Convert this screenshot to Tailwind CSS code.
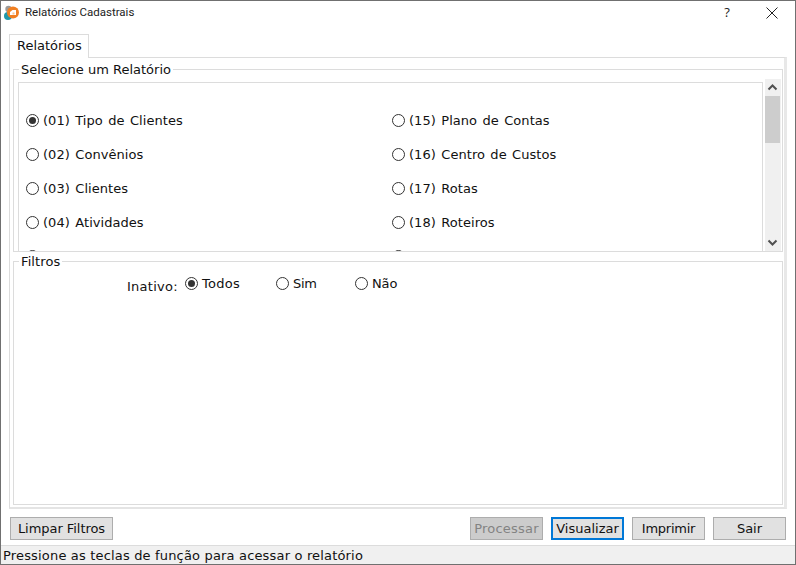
<!DOCTYPE html>
<html><head><meta charset="utf-8">
<script src="https://cdn.jsdelivr.net/npm/@tailwindcss/browser@4"></script>
</head>
<body class="m-0 bg-white">
<div class="w-[796px] h-[565px] flex flex-col border border-[#707070] bg-white overflow-hidden font-['DejaVu_Sans',sans-serif] text-[13px] text-[#111]">
  <!-- title bar -->
  <div class="h-[24px] mb-[1px] shrink-0 flex items-center pl-[2px]">
    <svg width="18" height="18" viewBox="0 0 18 18" class="shrink-0">
      <circle cx="5.500" cy="5" r="3.200" fill="#9a9a9a"/>
      <circle cx="5" cy="12" r="4" fill="#1f97a8"/>
      <circle cx="10" cy="8.500" r="6" fill="#f07f22"/>
      <path d="M7 11V8l2.500-2H13v5z" fill="#fff"/>
      <path d="M9.500 10.500V8.500h2v2z" fill="#f9c08e"/>
    </svg>
    <span class="ml-[4px] font-['Roboto',sans-serif] text-[11.5px] text-[#222]">Relatórios Cadastrais</span>
    <span class="ml-auto w-[14px] text-center font-['Open_Sans',sans-serif] text-[13px] text-[#222]">?</span>
    <svg width="12" height="12" viewBox="0 0 12 12" class="ml-[32px] mr-[17px]"><path d="M.5.500l11 11M11.500.500l-11 11" stroke="#222" stroke-width="1" fill="none"/></svg>
  </div>
  <!-- tabs -->
  <div class="mt-[8px] ml-[8px] h-[24px] w-[80px] shrink-0 border border-b-0 border-[#dcdcdc] flex items-center pl-[7px] pb-[2px] relative z-10 bg-white">Relatórios</div>
  <!-- tab panel -->
  <div class="ml-[8px] w-[778px] h-[452px] shrink-0 border border-[#dcdcdc] border-r-[3px] border-r-[#e8e8e8] border-b-[2px] border-b-[#e4e4e4] flex flex-col pl-[3px] -mt-px">
    <!-- group 1 -->
    <div class="relative mt-[11px] w-[770px] h-[182px] shrink-0 border border-b-0 border-[#dcdcdc] flex pl-[4px] pt-[12px]">
      <span class="absolute left-[5px] -top-[8px] bg-white px-[2px] leading-[15px]">Selecione um Relatório</span>
      <div class="w-[745px] h-[169px] shrink-0 border border-b-0 border-[#dcdcdc] overflow-hidden pl-[7px] pt-[21px] grid grid-cols-[366px_1fr] auto-rows-[34px] tracking-[0.05px] [word-spacing:1.2px]">
        <div class="flex items-center h-[34px]"><span class="w-[13px] h-[13px] -mt-[2px] rounded-full border border-[#333] flex items-center justify-center mr-[4px]"><span class="w-[7px] h-[7px] rounded-full bg-[#333]"></span></span>(01) Tipo de Clientes</div>
        <div class="flex items-center h-[34px]"><span class="w-[13px] h-[13px] -mt-[2px] rounded-full border border-[#333] mr-[4px]"></span>(15) Plano de Contas</div>
        <div class="flex items-center h-[34px]"><span class="w-[13px] h-[13px] -mt-[2px] rounded-full border border-[#333] mr-[4px]"></span>(02) Convênios</div>
        <div class="flex items-center h-[34px]"><span class="w-[13px] h-[13px] -mt-[2px] rounded-full border border-[#333] mr-[4px]"></span>(16) Centro de Custos</div>
        <div class="flex items-center h-[34px]"><span class="w-[13px] h-[13px] -mt-[2px] rounded-full border border-[#333] mr-[4px]"></span>(03) Clientes</div>
        <div class="flex items-center h-[34px]"><span class="w-[13px] h-[13px] -mt-[2px] rounded-full border border-[#333] mr-[4px]"></span>(17) Rotas</div>
        <div class="flex items-center h-[34px]"><span class="w-[13px] h-[13px] -mt-[2px] rounded-full border border-[#333] mr-[4px]"></span>(04) Atividades</div>
        <div class="flex items-center h-[34px]"><span class="w-[13px] h-[13px] -mt-[2px] rounded-full border border-[#333] mr-[4px]"></span>(18) Roteiros</div>
        <div class="flex items-center h-[34px]"><span class="w-[13px] h-[13px] -mt-[2px] rounded-full border border-[#333] mr-[4px]"></span></div>
        <div class="flex items-center h-[34px]"><span class="w-[13px] h-[13px] -mt-[2px] rounded-full border border-[#333] mr-[4px]"></span></div>
      </div>
      <div class="ml-[2px] -mt-[3px] w-[16px] h-[172px] shrink-0 bg-[#f0f0f0] flex flex-col items-start">
        <svg width="16" height="17" viewBox="0 0 16 17" class="shrink-0"><path d="M3.500 10.500L7.500 6.500l4 4" stroke="#505050" stroke-width="2" fill="none"/></svg>
        <div class="w-[15px] h-[47px] bg-[#cdcdcd]"></div>
        <svg width="16" height="17" viewBox="0 0 16 17" class="shrink-0 mt-auto"><path d="M3.500 6.500l4 4 4-4" stroke="#505050" stroke-width="2" fill="none"/></svg>
      </div>
    </div>
    <div class="h-px w-[770px] bg-[#dcdcdc] shrink-0"></div>
    <!-- group 2 -->
    <div class="relative mt-[9px] w-[770px] h-[244px] shrink-0 border border-[#dcdcdc]">
      <span class="absolute left-[5px] -top-[8px] bg-white px-[2px] leading-[15px] tracking-[0.1px]">Filtros</span>
      <div class="flex items-center h-[20px] mt-[12px] pl-[113px]">
        <span class="mt-[5px] w-[58px] shrink-0 tracking-[0.25px]">Inativo:</span>
        <span class="w-[13px] h-[13px] -mt-[1px] shrink-0 rounded-full border border-[#333] flex items-center justify-center"><span class="w-[7px] h-[7px] rounded-full bg-[#333]"></span></span>
        <span class="ml-[4px] w-[74px] shrink-0 tracking-[0.3px]">Todos</span>
        <span class="w-[13px] h-[13px] -mt-[1px] shrink-0 rounded-full border border-[#333]"></span>
        <span class="ml-[4px] w-[62px] shrink-0 -tracking-[0.3px]">Sim</span>
        <span class="w-[13px] h-[13px] -mt-[1px] shrink-0 rounded-full border border-[#333]"></span>
        <span class="ml-[4px] -tracking-[0.1px]">Não</span>
      </div>
    </div>
  </div>
  <!-- buttons -->
  <div class="mt-[8px] h-[24px] shrink-0 flex pl-[9px]">
    <button class="w-[103px] h-[23px] border border-[#adadad] bg-[#e1e1e1] -tracking-[0.05px]">Limpar Filtros</button>
    <button class="ml-[357px] w-[73px] h-[23px] border border-[#adadad] bg-[#cccccc] text-[#838383] tracking-[0.2px]">Processar</button>
    <button class="ml-[8px] w-[73px] h-[23px] border-2 border-[#0078d7] bg-[#e1e1e1]">Visualizar</button>
    <button class="ml-[8px] w-[73px] h-[23px] border border-[#adadad] bg-[#e1e1e1] -tracking-[0.25px]">Imprimir</button>
    <button class="ml-[8px] w-[73px] h-[23px] border border-[#adadad] bg-[#e1e1e1]">Sair</button>
  </div>
  <!-- status -->
  <div class="mt-[4px] flex-1 border-t border-[#dcdcdc] bg-[#f0f0f0] flex items-center pl-[2px] tracking-[0.17px]">Pressione as teclas de função para acessar o relatório</div>
</div>
</body></html>
